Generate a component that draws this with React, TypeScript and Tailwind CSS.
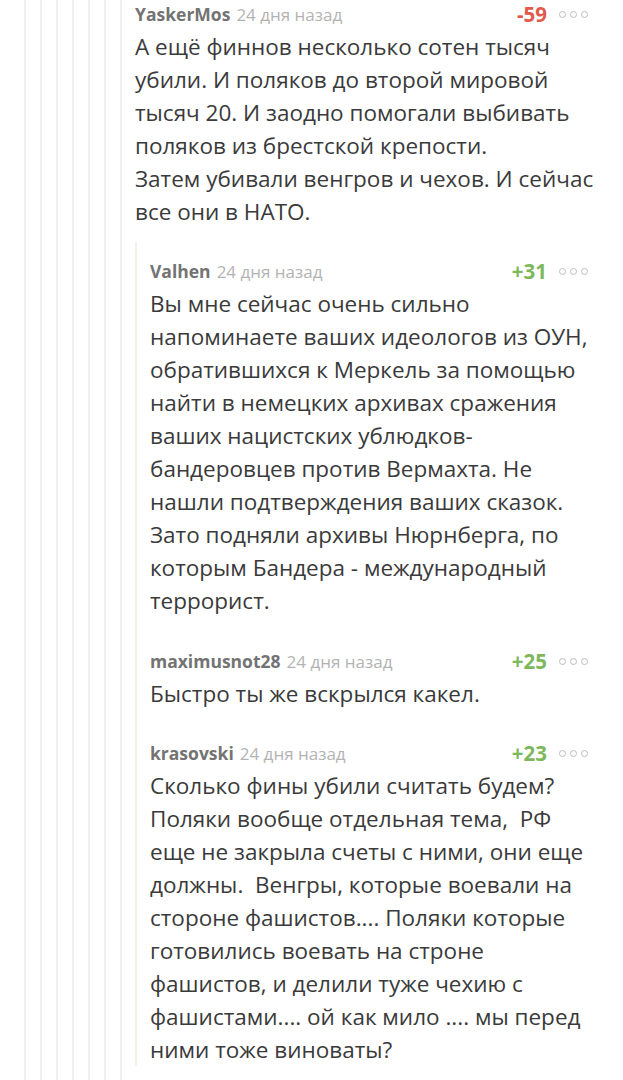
import React from 'react';

interface Comment {
    id: string;
    author: string;
    date: string;
    rating: number;
    lines: string[];
}

const parent: Comment = {
    id: 'c1',
    author: 'YaskerMos',
    date: '24 дня назад',
    rating: -59,
    lines: [
        'А ещё финнов несколько сотен тысяч',
        'убили. И поляков до второй мировой',
        'тысяч 20. И заодно помогали выбивать',
        'поляков из брестской крепости.',
        'Затем убивали венгров и чехов. И сейчас',
        'все они в НАТО.',
    ],
};

const replies: Comment[] = [
    {
        id: 'c2',
        author: 'Valhen',
        date: '24 дня назад',
        rating: 31,
        lines: [
            'Вы мне сейчас очень сильно',
            'напоминаете ваших идеологов из ОУН,',
            'обратившихся к Меркель за помощью',
            'найти в немецких архивах сражения',
            'ваших нацистских ублюдков-',
            'бандеровцев против Вермахта. Не',
            'нашли подтверждения ваших сказок.',
            'Зато подняли архивы Нюрнберга, по',
            'которым Бандера - международный',
            'террорист.',
        ],
    },
    {
        id: 'c3',
        author: 'maximusnot28',
        date: '24 дня назад',
        rating: 25,
        lines: ['Быстро ты же вскрылся какел.'],
    },
    {
        id: 'c4',
        author: 'krasovski',
        date: '24 дня назад',
        rating: 23,
        lines: [
            'Сколько фины убили считать будем?',
            'Поляки вообще отдельная тема,  РФ',
            'еще не закрыла счеты с ними, они еще',
            'должны.  Венгры, которые воевали на',
            'стороне фашистов.... Поляки которые',
            'готовились воевать на строне',
            'фашистов, и делили туже чехию с',
            'фашистами.... ой как мило .... мы перед',
            'ними тоже виноваты?',
        ],
    },
];

const MoreDots = () => (
    <div className="flex items-center gap-[4px]">
        {[0, 1, 2].map((i) => (
            <span key={i} className="block w-[7px] h-[7px] rounded-full border-[1.5px] border-[#bdbdbd]" />
        ))}
    </div>
);

const CommentItem = ({ comment }: { comment: Comment }) => {
    const negative = comment.rating < 0;
    return (
        <div>
            {/* header: author, date, rating + menu */}
            <div className="flex h-[28px] items-center justify-between">
                <div className="flex items-baseline gap-[6px] whitespace-nowrap">
                    <span className="text-[17.5px] font-bold text-[#737373]">{comment.author}</span>
                    <span className="text-[17px] text-[#b3b3b3]">{comment.date}</span>
                </div>
                <div className="flex items-center gap-[12px]">
                    <span className={`text-[20.5px] font-bold ${negative ? 'text-[#df5a4b]' : 'text-[#7db85d]'}`}>
                        {negative ? comment.rating : `+${comment.rating}`}
                    </span>
                    <MoreDots />
                </div>
            </div>
            <div className="pt-[2px] text-[22.5px] leading-[33px] text-[#3a3a3a] whitespace-pre">
                {comment.lines.map((line, i) => (
                    <div key={i}>{line}</div>
                ))}
            </div>
        </div>
    );
};

export default function App() {
    // faint guide lines for the thread depth
    const depth = [0, 1, 2, 3, 4, 5];

    return (
        <div className="min-h-[1080px] bg-white pl-[24px] font-['Open_Sans',sans-serif]">
            {depth.reduceRight<React.ReactNode>(
                (inner, d) => (
                    <div key={d} className="min-h-[1080px] border-l-2 border-[#f1f0eb] pl-[14px]">
                        {inner}
                    </div>
                ),
                <div className="min-h-[1080px] border-l-2 border-[#f1f0eb] pl-[13px] pr-[35px]">
                    <CommentItem comment={parent} />
                    <div className="mt-[14px] border-l-2 border-[#f1f0eb] pl-[13px] pt-[15px]">
                        <CommentItem comment={replies[0]} />
                        <div className="mt-[30px]">
                            <CommentItem comment={replies[1]} />
                        </div>
                        <div className="mt-[29px]">
                            <CommentItem comment={replies[2]} />
                        </div>
                    </div>
                </div>
            )}
        </div>
    );
}
